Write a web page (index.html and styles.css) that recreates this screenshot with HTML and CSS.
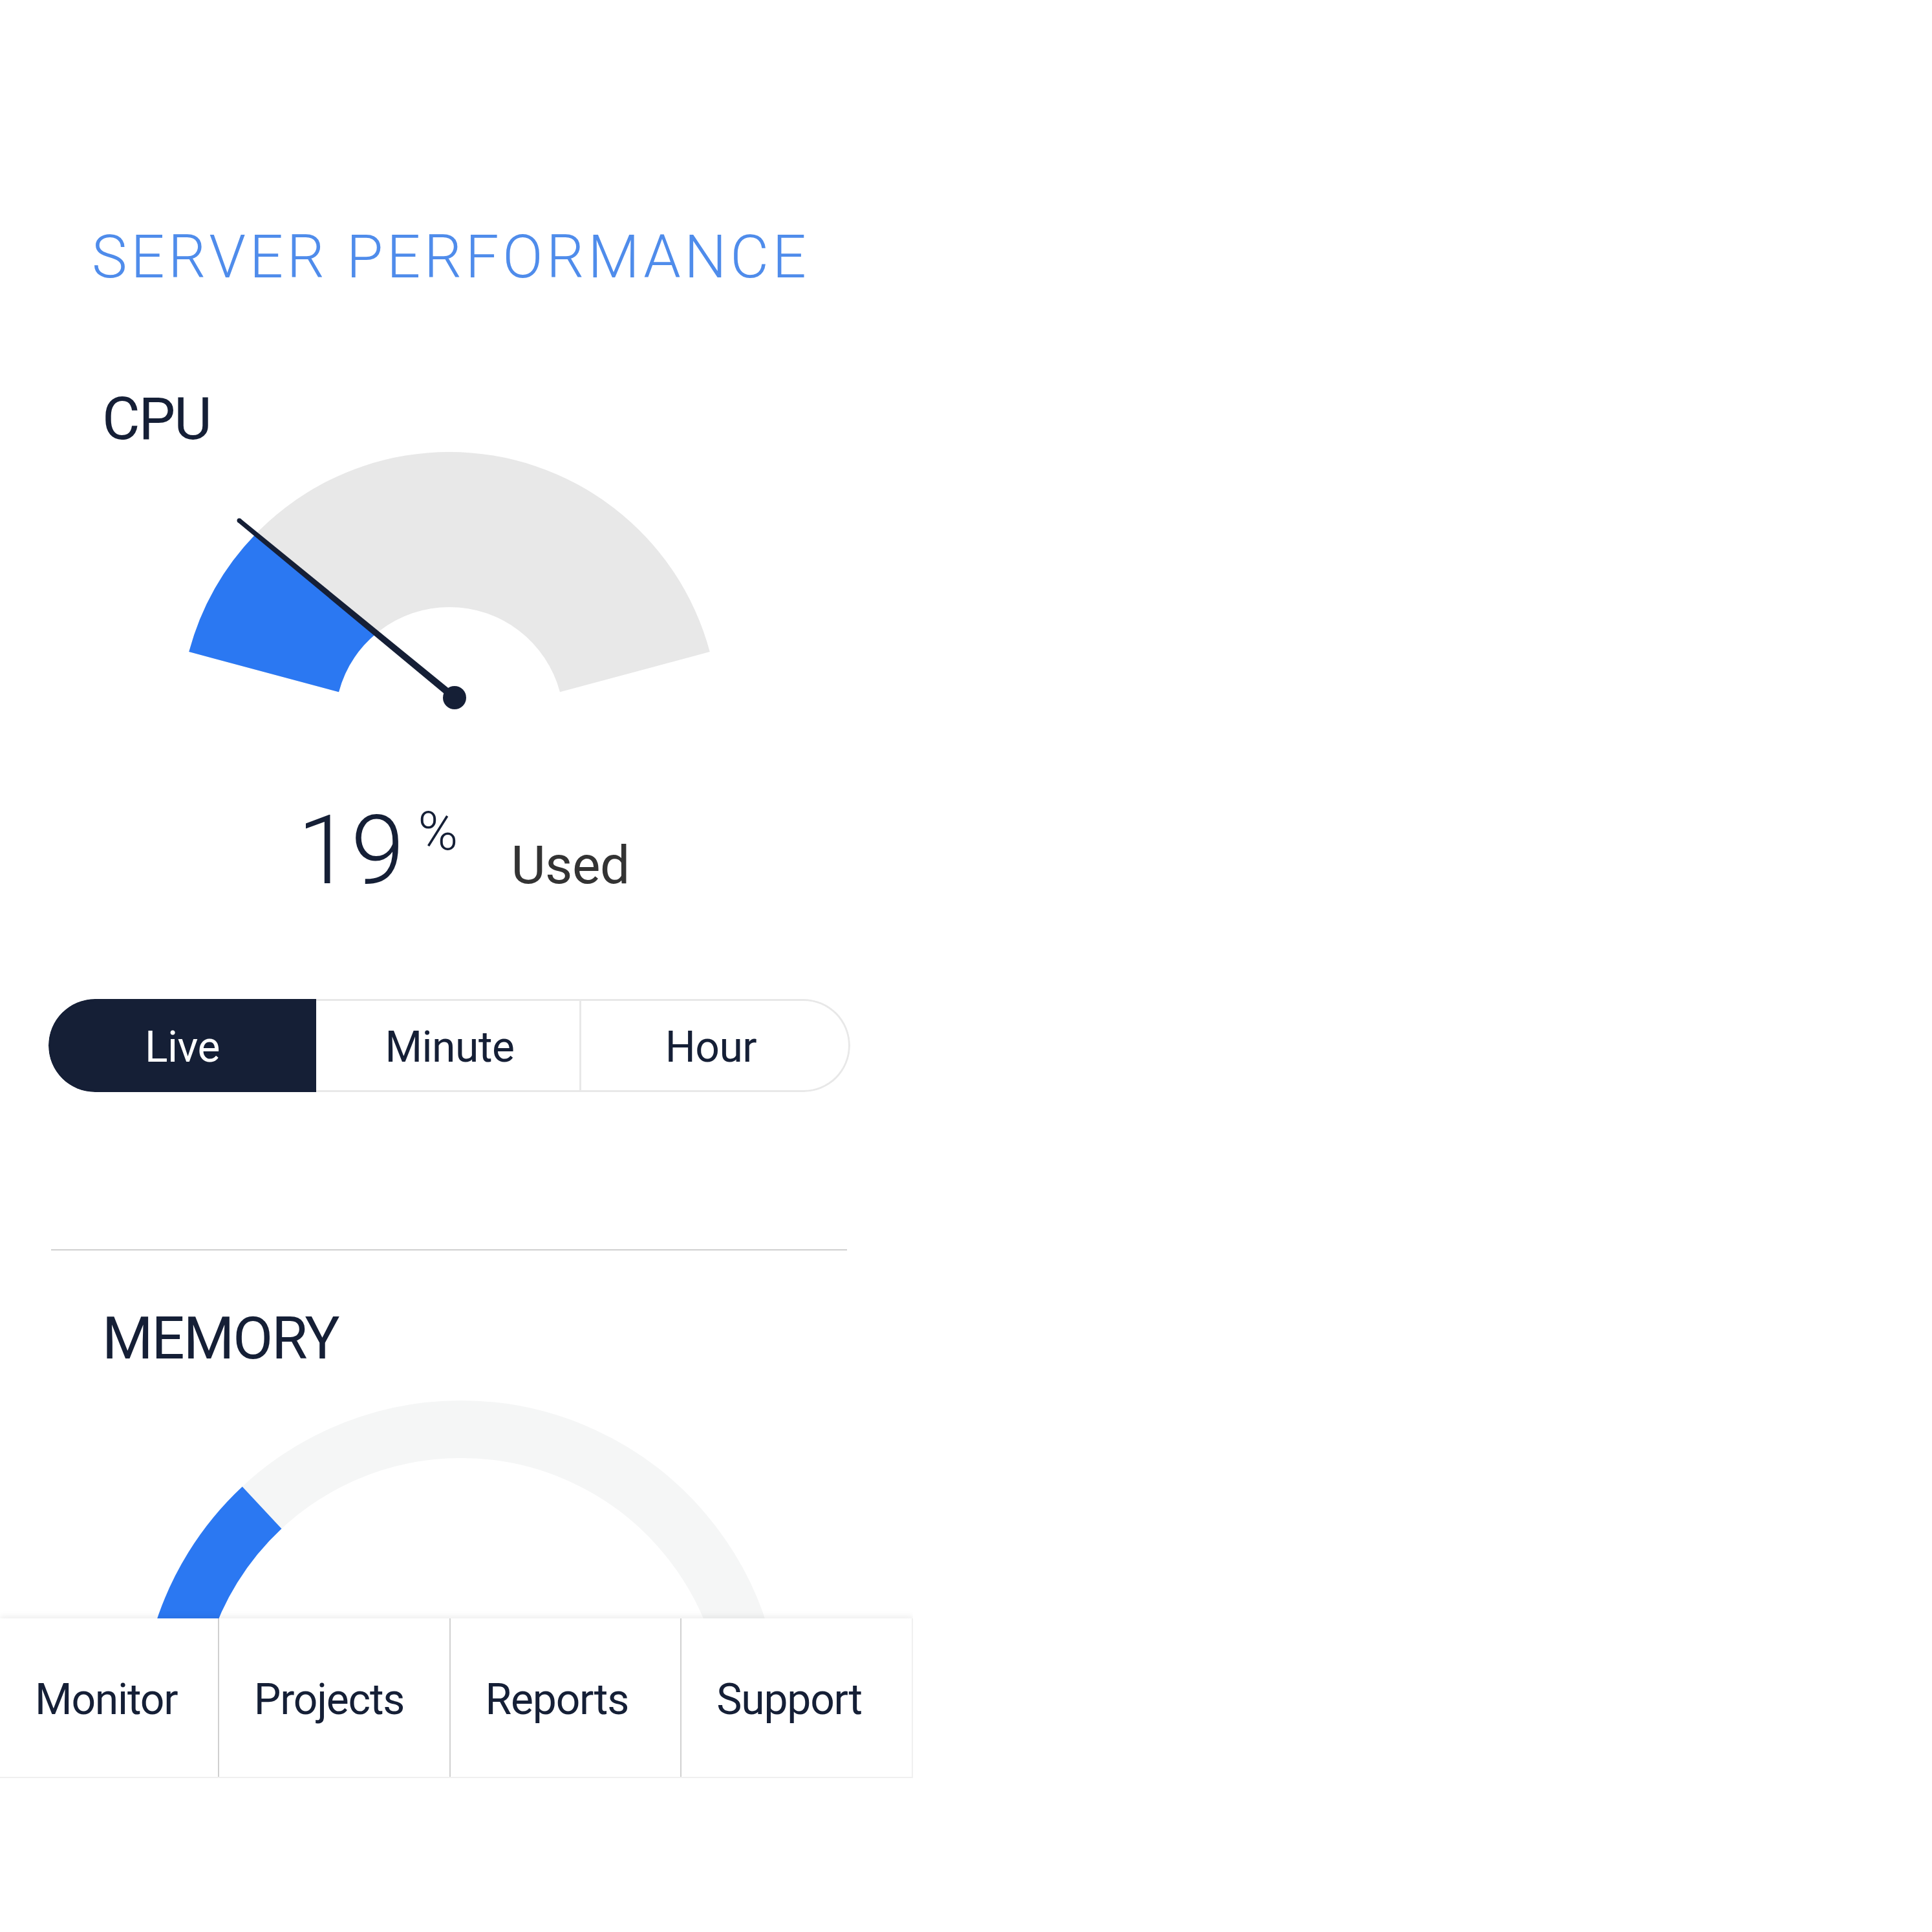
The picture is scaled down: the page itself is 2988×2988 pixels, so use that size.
FILE: index.html
```html
<!DOCTYPE html>
<html lang="en">
<head>
<meta charset="utf-8">
<title>Server Performance</title>
<link rel="stylesheet" href="styles.css">
</head>
<body>
<div class="app">
  <h1 class="title">SERVER PERFORMANCE</h1>

  <section class="metric">
    <h2 class="metric-title">CPU</h2>
    <svg class="gauge" width="1240" height="440" viewBox="0 0 1240 440">
      <path class="cpu-track" d="M217.2 312.1 A417 417 0 0 1 1022.8 312.1 L791 374.2 A177 177 0 0 0 449 374.2 Z"/>
      <path class="cpu-fill" d="M217.2 312.1 A417 417 0 0 1 320.4 129.9 L507.2 283.6 A177 177 0 0 0 449 374.2 Z"/>
      <polygon class="needle" points="631.5,378.75 297.2,106.3 292.8,111.7 624.5,387.25"/>
      <circle class="needle" cx="295" cy="109" r="3.5"/>
      <circle class="needle" cx="628" cy="383" r="18"/>
    </svg>
    <div class="readout">
      <span class="num">19</span>
      <span class="pct">%</span>
      <span class="unit">Used</span>
    </div>
    <div class="seg">
      <button class="seg-btn live active">Live</button>
      <button class="seg-btn minute">Minute</button>
      <button class="seg-btn hour">Hour</button>
    </div>
  </section>

  <hr class="divider">

  <section class="metric">
    <h2 class="metric-title mem">MEMORY</h2>
    <svg class="gauge" width="1240" height="632" viewBox="0 0 1240 632">
      <path class="mem-track" d="M201.9 660.9 A451.5 451.5 0 1 1 1074.1 660.9"/>
      <path class="mem-fill" d="M201.9 660.9 A451.5 451.5 0 0 1 330.1 213.8"/>
    </svg>
  </section>

  <nav class="tabbar">
    <a class="tab first">Monitor</a>
    <a class="tab">Projects</a>
    <a class="tab">Reports</a>
    <a class="tab">Support</a>
  </nav>
</div>
</body>
</html>
```

FILE: styles.css
```css
* { box-sizing: border-box; }

html, body {
  margin: 0;
  padding: 0;
  background: #ffffff;
}

body {
  font-family: Roboto, "Liberation Sans", sans-serif;
  color: #151f36;
}

.app {
  position: relative;
  width: 1412px;
  height: 2750px;
  overflow: hidden;
  padding: 352px 97px 0 75px;
}

.title {
  margin: 0;
  padding-left: 67px;
  font-size: 92px;
  line-height: 1;
  font-weight: 300;
  letter-spacing: 5.6px;
  color: #4f8ceb;
}

.metric-title {
  margin: 160px 0 0 0;
  padding-left: 83px;
  font-size: 90px;
  line-height: 1;
  font-weight: 400;
  letter-spacing: -2px;
  color: #151f36;
}

.metric-title.mem {
  margin-top: 92px;
}

.gauge {
  display: block;
  margin-top: 2px;
}

.cpu-track { fill: #e8e8e8; }
.cpu-fill { fill: #2b78f2; }
.needle { fill: #151f36; }

.mem-track {
  fill: none;
  stroke: #f5f6f6;
  stroke-width: 89;
}
.mem-fill {
  fill: none;
  stroke: #2b78f2;
  stroke-width: 89;
}

.readout {
  display: flex;
  align-items: baseline;
  margin-top: 105px;
  padding-left: 385px;
  line-height: 1;
}

.num {
  font-size: 149px;
  font-weight: 300;
  color: #151f36;
}

.pct {
  align-self: flex-start;
  margin-top: 3px;
  margin-left: 21px;
  font-size: 84px;
  font-weight: 300;
  color: #151f36;
}

.unit {
  margin-left: 82px;
  font-size: 82px;
  font-weight: 400;
  letter-spacing: -0.5px;
  color: #333333;
}

.seg {
  display: flex;
  height: 144px;
  margin-top: 155px;
  border-radius: 72px;
  overflow: hidden;
}

.seg-btn {
  flex: none;
  display: flex;
  align-items: center;
  justify-content: center;
  margin: 0;
  padding: 5px 0 0 0;
  font-family: inherit;
  font-size: 66px;
  line-height: 1;
  letter-spacing: -0.5px;
  color: #151f36;
  background: #ffffff;
  border: 3px solid #e8e8e8;
  border-left: none;
}

.seg-btn.live {
  width: 414px;
  border-left: 3px solid #e8e8e8;
  border-radius: 72px 0 0 72px;
}

.seg-btn.minute {
  width: 410px;
  padding-left: 6px;
}

.seg-btn.hour {
  width: 416px;
  border-radius: 0 72px 72px 0;
  padding-right: 12px;
}

.seg-btn.active {
  background: #151f36;
  border-color: #151f36;
  color: #ffffff;
}

.divider {
  margin: 243px 5px 0 4px;
  height: 2px;
  border: none;
  background: #d0d0d0;
}

.tabbar {
  position: absolute;
  left: 0;
  bottom: 0;
  width: 1412px;
  height: 247px;
  display: flex;
  background: #ffffff;
  box-shadow: 0 -3px 10px rgba(0, 0, 0, 0.07);
  border-bottom: 2px solid #f0f0f0;
  border-right: 2px solid #f0f0f0;
}

.tab {
  width: 358px;
  display: flex;
  align-items: center;
  padding: 6px 0 0 54px;
  font-size: 66px;
  line-height: 1;
  letter-spacing: -1.2px;
  color: #151f36;
  border-left: 2px solid #d0d0d0;
}

.tab.first {
  width: 337px;
  border-left: none;
}
```
